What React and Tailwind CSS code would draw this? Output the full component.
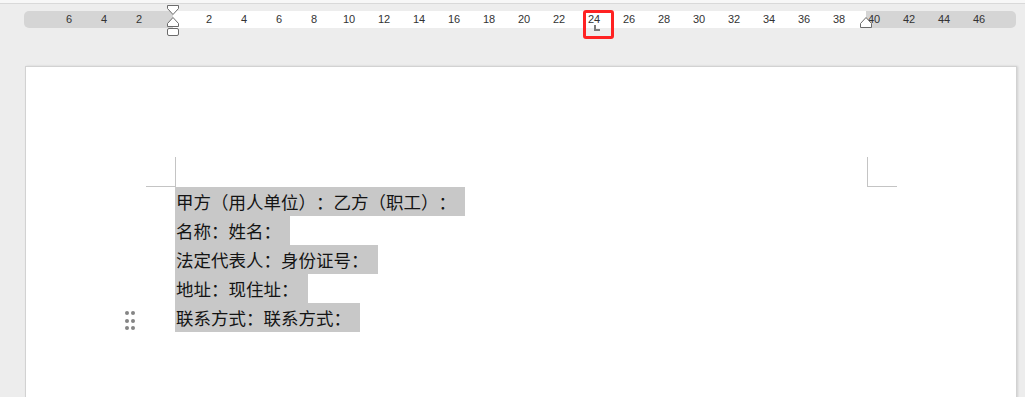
import React from 'react'

const left = [6, 4, 2]
const right = [2, 4, 6, 8, 10, 12, 14, 16, 18, 20, 22, 24, 26, 28, 30, 32, 34, 36, 38, 40, 42, 44, 46]

const lines = [
  { text: '甲方（用人单位）：乙方（职工）：', w: 'w-[290px]' },
  { text: '名称：姓名：', w: 'w-[115px]' },
  { text: '法定代表人：身份证号：', w: 'w-[203px]' },
  { text: '地址：现住址：', w: 'w-[133px]' },
  { text: '联系方式：联系方式：', w: 'w-[185px]' },
]

function Ruler() {
  return (
    <div className="relative ml-[24px] mt-[7px] flex h-[17px] w-[992px] overflow-visible">
      <div className="w-[149px] rounded-l-[5px] bg-[#d5d5d5]" />
      <div className="w-[693px] bg-white" />
      <div className="flex-1 rounded-r-[5px] bg-[#d5d5d5]" />

      {/* numbers */}
      <div className="absolute inset-0 flex pl-[27.5px] text-[11px] leading-[17px] text-[#333]">
        {left.map((n) => (
          <span key={'l' + n} className="w-[35px] shrink-0 text-center">{n}</span>
        ))}
        <span className="w-[35px] shrink-0" />
        {right.map((n) => (
          <span key={'r' + n} className="relative w-[35px] shrink-0 text-center">
            {n}
            {n === 24 && (
              <>
                <span className="absolute left-[17.5px] top-[14px] h-[6px] w-[6px] border-b-2 border-l-2 border-[#7a7a7a]" />
                <span className="absolute left-[6.5px] top-[-1px] h-[29px] w-[31px] rounded-[3px] border-[3px] border-[#ff2222]" />
              </>
            )}
          </span>
        ))}
      </div>

      {/* left indent markers */}
      <svg className="absolute left-[142px] top-[-7px]" width="14" height="36" viewBox="0 0 14 36">
        <path d="M1.5 1.5 H12.5 V4.5 L7 10.5 L1.5 4.5 Z" fill="#fff" stroke="#6b6b6b" strokeLinejoin="round" />
        <path d="M7 13.5 L12.5 19.5 V22.5 H1.5 V19.5 Z" fill="#fff" stroke="#6b6b6b" strokeLinejoin="round" />
        <rect x="1.5" y="24.5" width="11" height="7" rx="1.5" fill="#fff" stroke="#6b6b6b" />
      </svg>

      {/* right indent marker */}
      <svg className="absolute left-[835px] top-[6px]" width="14" height="12" viewBox="0 0 14 12">
        <path d="M7 0.5 L12.5 6.5 V10.5 H1.5 V6.5 Z" fill="#fff" stroke="#6b6b6b" strokeLinejoin="round" />
      </svg>
    </div>
  )
}

function Handle() {
  return (
    <div className="ml-[99px] mr-[40px] mt-[8px] grid h-[19px] w-[10px] shrink-0 grid-cols-2 gap-x-[2px] gap-y-[3.5px]">
      {[0, 1, 2, 3, 4, 5].map((d) => (
        <span key={d} className="h-[4px] w-[4px] rounded-full bg-[#858585]" />
      ))}
    </div>
  )
}

export default function App() {
  return (
    <div
      className="h-[397px] w-[1025px] overflow-hidden bg-[#ededed]"
      style={{ fontFamily: '"Liberation Sans", Arial, sans-serif' }}
    >
      <div className="h-[4px] border-b border-[#d9d9d9] bg-[#f7f7f7]" />
      <Ruler />

      <div className="ml-[25px] mt-[38px] h-[340px] w-[992px] border border-[#d2d2d2] bg-white pt-[90px] shadow-[1px_0_2px_rgba(0,0,0,0.12)]">
        {/* margin corner marks */}
        <div className="flex">
          <div className="ml-[120px] h-[30px] w-[30px] border-b border-r border-[#c4c4c4]" />
          <div className="ml-[691px] h-[30px] w-[30px] border-b border-l border-[#c4c4c4]" />
        </div>

        <div
          className="flex flex-col items-start text-[17.5px] text-[#141414] [text-spacing-trim:space-all]"
          style={{ fontFamily: '"Noto Sans CJK SC", "Noto Sans", sans-serif' }}
        >
          {lines.map((l, i) => (
            <div key={i} className="flex">
              {i === lines.length - 1 ? <Handle /> : <div className="w-[149px] shrink-0" />}
              <div className={`${l.w} h-[29px] whitespace-nowrap bg-[#c8c8c8] pl-[1px] leading-[29px]`}>
                {l.text}
              </div>
            </div>
          ))}
        </div>
      </div>
    </div>
  )
}
